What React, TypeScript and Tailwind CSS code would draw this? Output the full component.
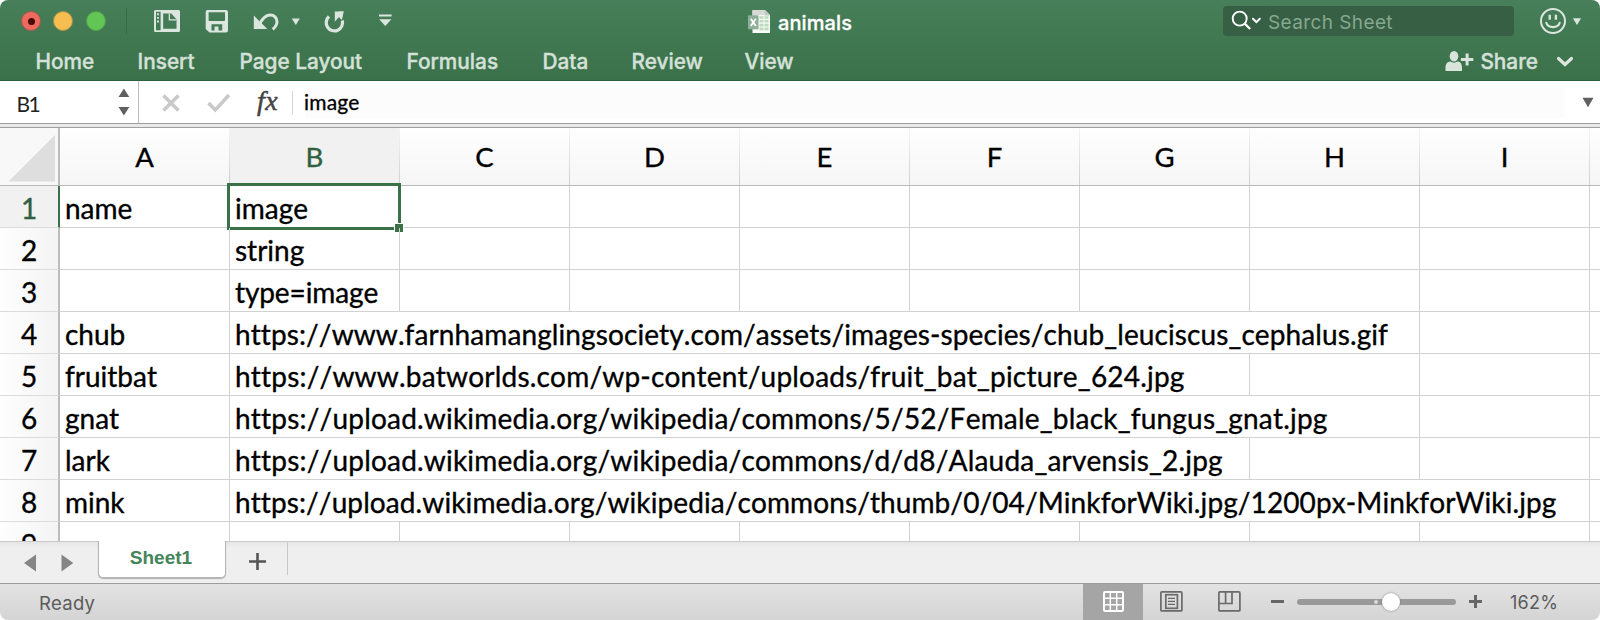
import type { ReactNode } from "react";

const columns = ["A", "B", "C", "D", "E", "F", "G", "H", "I"];

type Row = { name: string; value: string; tracking: string; span: string; rest: number };

const rows: Row[] = [
  { name: "name", value: "image", tracking: "", span: "w-[170px]", rest: 7 },
  { name: "", value: "string", tracking: "", span: "w-[170px]", rest: 7 },
  { name: "", value: "type=image", tracking: "tracking-[-0.1px]", span: "w-[170px]", rest: 7 },
  { name: "chub", value: "https://www.farnhamanglingsociety.com/assets/images-species/chub_leuciscus_cephalus.gif", tracking: "tracking-[0.1px]", span: "w-[1190px]", rest: 1 },
  { name: "fruitbat", value: "https://www.batworlds.com/wp-content/uploads/fruit_bat_picture_624.jpg", tracking: "tracking-[0.2px]", span: "w-[1020px]", rest: 2 },
  { name: "gnat", value: "https://upload.wikimedia.org/wikipedia/commons/5/52/Female_black_fungus_gnat.jpg", tracking: "tracking-[0.2px]", span: "w-[1190px]", rest: 1 },
  { name: "lark", value: "https://upload.wikimedia.org/wikipedia/commons/d/d8/Alauda_arvensis_2.jpg", tracking: "tracking-[0.2px]", span: "w-[1020px]", rest: 2 },
  { name: "mink", value: "https://upload.wikimedia.org/wikipedia/commons/thumb/0/04/MinkforWiki.jpg/1200px-MinkforWiki.jpg", tracking: "tracking-[0.1px]", span: "w-[1360px]", rest: 0 },
  { name: "", value: "", tracking: "", span: "w-[170px]", rest: 7 },
];

const menus = [
  { label: "Home", width: "w-[102px]" },
  { label: "Insert", width: "w-[102px]" },
  { label: "Page Layout", width: "w-[167px]" },
  { label: "Formulas", width: "w-[136px]" },
  { label: "Data", width: "w-[89px]" },
  { label: "Review", width: "w-[113px]" },
  { label: "View", width: "w-[60px]" },
];

function Light({ className, dot }: { className: string; dot?: boolean }) {
  return (
    <span className={`flex size-5 items-center justify-center rounded-full border ${className}`}>
      {dot && <span className="size-[7px] rounded-full bg-[#4b0a05]" />}
    </span>
  );
}

function TitleBar() {
  return (
    <div className="flex h-[43px] items-start">
      <div className="flex w-[748px] items-start pl-[21px]">
        <div className="mt-[11px] flex gap-[12.4px]">
          <Light className="border-[#a8564a] bg-[#ed6a5f]" dot />
          <Light className="border-[#a8934a] bg-[#f6be50]" />
          <Light className="border-[#4fa04a] bg-[#61c656]" />
        </div>
        <span className="mt-2 ml-[20.4px] h-[26px] w-px bg-[#376a46]" />
        <svg className="mt-[9px] ml-[26.500px]" width="26" height="24" viewBox="0 0 26 24" fill="#dbe6de">
          <path d="M1.500 1h23A1.500 1.500 0 0 1 26 2.500v19a1.500 1.500 0 0 1-1.500 1.500h-23A1.500 1.500 0 0 1 0 21.500v-19A1.500 1.500 0 0 1 1.500 1zM2 2.700v18.600h4.600V2.700zM9.200 4.600v15.200h13.300V10.200l-5.300-5.600z" fillRule="evenodd" />
          <path d="M3 4.300h1.900v1.900H3zM3 7.900h1.900v1.900H3zM3 11.500h1.900v1.900H3z" />
          <path d="M16 4.600v5.600h6.500v1.300h-7.800V4.600z" />
        </svg>
        <svg className="mt-[9px] ml-[25.5px]" width="24" height="24" viewBox="0 0 24 24" fill="#dbe6de">
          <path d="M2 1h19a2 2 0 0 1 2 2v18.500a2 2 0 0 1-2 2H4.500L.7 20V3A2 2 0 0 1 2 1zM3.600 3.200v8a.8.8 0 0 0 .8.8h14.800a.8.8 0 0 0 .8-.8v-8zM6.500 15.200v6.400h3v-4h4v4h3.700v-6.400z" fillRule="evenodd" />
        </svg>
        <svg className="mt-[9px] ml-[23.5px]" width="27" height="24" viewBox="0 0 27 24" fill="none" stroke="#dbe6de">
          <path d="M.8 6.500v13.500h13.500z" fill="#dbe6de" stroke="none" />
          <path d="M6.500 15c2.500-4.700 6.500-9 10.800-9a6.600 6.600 0 0 1 6.700 6.700c0 3.200-1.700 5.400-4.300 7.600" strokeWidth="3" />
        </svg>
        <svg className="mt-[17px] ml-[11.500px]" width="10" height="9" viewBox="0 0 10 9"><path d="M.8 1.500h8L4.800 8z" fill="#dbe6de" /></svg>
        <svg className="mt-[9px] ml-[22.500px]" width="22" height="26" viewBox="0 0 22 26" fill="none" stroke="#dbe6de">
          <path d="M5 7.500a8.200 8.200 0 1 0 13.300 4" strokeWidth="3.200" />
          <path d="M10.800 2.500h8.900l-8.900 10.200z" fill="#dbe6de" stroke="none" />
          <path d="M19.700 2.500h-5v5.500l3.300 3z" fill="#dbe6de" stroke="none" />
        </svg>
        <svg className="mt-[14px] ml-[32px]" width="15" height="14" viewBox="0 0 15 14"><path d="M1 .4h12.600v2.100H1zM1.200 5.200h12.200L7.300 12z" fill="#dbe6de" /></svg>
      </div>
      <svg className="mt-[9px]" width="23" height="25" viewBox="0 0 23 25">
        <path d="M4.500 1H17l5 5v18H4.500z" fill="#f7f9f7" />
        <path d="M4.500 1H17l-1 5H9l-4.500 3z" fill="#d6d9d6" />
        <path d="M16.500 1v5.500H22z" fill="#bfc6c0" />
        <path d="M11.500 7.200h4v2.600h-4zM11.500 11h4v2.600h-4zM11.500 14.800h4v2.600h-4zM11.500 18.600h4v2.600h-4zM16.500 7.200h4v2.600h-4zM16.500 11h4v2.600h-4zM16.500 14.800h4v2.600h-4zM16.500 18.600h4v2.600h-4z" fill="#bcdcbe" />
        <rect x="0" y="6.300" width="10.500" height="14" fill="#8fae98" />
        <path d="m2.800 9.800 5 7.200M7.800 9.800l-5 7.200" stroke="#fff" strokeWidth="1.800" />
      </svg>
      <span className="mt-[11px] ml-[7px] text-[20px] leading-6 font-medium tracking-[0.1px] text-white [-webkit-text-stroke:0.3px]">animals</span>
      <div className="ml-auto flex items-start pr-[18px]">
        <div className="mt-[6px] flex h-[30px] w-[291px] items-start rounded-[4px] bg-[#365f44] pl-[8px]">
          <svg className="mt-[4px]" width="30" height="22" viewBox="0 0 30 22" fill="none" stroke="#fff">
            <circle cx="8.700" cy="8.600" r="7" strokeWidth="1.900" />
            <path d="m13.700 13.700 5.500 5.300" strokeWidth="2.300" />
            <path d="m22 8.800 3.400 3.400 3.400-3.400" strokeWidth="2" strokeLinecap="round" />
          </svg>
          <span className="mt-[5px] ml-[7px] text-[19px] leading-6 tracking-[0.4px] text-[#86a790]">Search Sheet</span>
        </div>
        <svg className="mt-[7px] ml-[25px]" width="28" height="28" viewBox="0 0 28 28" fill="none" stroke="#dbe6de">
          <circle cx="14" cy="14" r="12" strokeWidth="2" />
          <path d="M10.700 7.800v5M16.900 7.800v5" strokeWidth="2.400" />
          <path d="M7.300 15.800c1.500 5.700 11.900 5.700 13.400 0" strokeWidth="2.100" strokeLinecap="round" />
        </svg>
        <svg className="mt-[17px] ml-[5px]" width="10" height="9" viewBox="0 0 10 9"><path d="M.9 1.200h8.200L5 8z" fill="#dbe6de" /></svg>
      </div>
    </div>
  );
}

function Ribbon() {
  return (
    <div className="flex h-[37px] items-start pt-[7px] pl-[35.500px] text-[20.800px] leading-6 font-medium text-[#d5e1d8] [-webkit-text-stroke:0.35px]">
      {menus.map((m) => (
        <span key={m.label} className={`${m.width} shrink-0 whitespace-nowrap`}>{m.label}</span>
      ))}
      <svg className="ml-auto" width="29" height="22" viewBox="0 0 29 22" fill="#d9e4dc">
        <ellipse cx="9" cy="6.200" rx="4.300" ry="5.200" />
        <path d="M.5 21v-3.500c0-4 2.500-6 5-6 1.800 1.500 5 1.500 7 0 2.500 0 4.500 2 4.500 6V21z" />
        <path d="M20.600 3.500h3v4.500h4.700v3h-4.700v4.500h-3V11h-4.700V8h4.700z" />
      </svg>
      <span className="ml-[6px]">Share</span>
      <svg className="mt-[6px] mr-[26px] ml-[18px]" width="18" height="12" viewBox="0 0 18 12" fill="none"><path d="m2.500 2.500 6.500 6 6.500-6" stroke="#dbe6de" strokeWidth="3.200" strokeLinecap="round" /></svg>
    </div>
  );
}

function FormulaBar() {
  return (
    <div className="flex h-[42px] bg-white">
      <div className="flex w-[139px] shrink-0 items-start border-r border-[#bdbdbd] font-[Lato]">
        <span className="mt-[11px] ml-[16.500px] w-[101.500px] text-[21px] leading-6 tracking-[-1.700px] text-[#222]">B1</span>
        <svg className="mt-[7px]" width="12" height="28" viewBox="0 0 12 28"><path d="M.5 9 5.900.5 11.300 9zM.5 19h10.800l-5.400 8.500z" fill="#606060" /></svg>
      </div>
      <svg className="mt-[12px] ml-[22px]" width="20" height="20" viewBox="0 0 20 20"><path d="m2.500 2.500 15 15M17.500 2.500l-15 15" stroke="#c9c9c9" strokeWidth="3.600" /></svg>
      <svg className="mt-[11px] ml-[26px]" width="24" height="21" viewBox="0 0 24 21" fill="none"><path d="m1.500 11 6.800 7L22 3" stroke="#c9c9c9" strokeWidth="3.600" /></svg>
      <span className="mt-[5px] ml-[26px] w-[35px] font-['Liberation_Serif'] text-[28px] leading-[30px] font-normal tracking-[0.5px] text-[#444] italic [-webkit-text-stroke:0.5px]">fx</span>
      <span className="mt-[10px] h-6 w-px bg-[#d5d5d5]" />
      <div className="mt-[6px] ml-[12px] flex h-[31px] w-[1260px] items-start bg-[#fcfcfc] font-[Lato] text-black">
        <span className="mt-[2px] -ml-px text-[21px] leading-[26px] tracking-[0.2px] [-webkit-text-stroke:0.3px]">image</span>
      </div>
      <svg className="mt-[16px] mr-[6px] ml-auto" width="12" height="11" viewBox="0 0 12 11"><path d="M.5.800h11L6 10.300z" fill="#606060" /></svg>
    </div>
  );
}

function Cell({ width, children, className = "" }: { width: string; children?: ReactNode; className?: string }) {
  return (
    <div className={`relative ${width} shrink-0 border-r border-[#d2d2d2] pl-[5px] text-[28px] leading-[44px] whitespace-nowrap text-black ${className}`}>
      {children}
    </div>
  );
}

function Sheet() {
  return (
    <div className="h-[414px] overflow-hidden border-b border-[#c9c9c9] bg-white font-[Lato] [font-kerning:none] [-webkit-text-stroke:0.35px]">
      <div className="flex h-[58px] border-b border-[#b9b9b9] bg-linear-to-b from-[#fefefe] to-[#f6f6f6]">
        <div className="w-[60px] shrink-0 border-r-2 border-[#bcbcbc] bg-[#f8f8f8]">
          <svg className="mt-[7px] ml-[8px]" width="47" height="47" viewBox="0 0 47 47"><path d="M47 0v46.500H.5z" fill="#dedede" /></svg>
        </div>
        {columns.map((c) => (
          <div
            key={c}
            className={`flex w-[170px] shrink-0 justify-center text-[27.500px] leading-[57px] ${c === "B" ? "bg-[#f1f1f1] text-[#30603f]" : "text-black"}`}
          >
            <span className="ml-auto">{c}</span>
            <span className="ml-auto h-full w-px bg-linear-to-b from-[#f5f5f5] to-[#cfcfcf]" />
          </div>
        ))}
      </div>
      {rows.map((row, i) => (
        <div key={i} className="flex h-[42px]">
          <div
            className={`w-[60px] shrink-0 border-r-2 text-center text-[28px] leading-[44px] ${
              i === 0 ? "border-[#3b7149] bg-[#f1f1f1] text-[#30603f]" : "border-[#bcbcbc] bg-linear-to-r from-[#fefefe] to-[#f4f4f4] text-black"
            } border-b border-b-[#dcdcdc]`}
          >
            {i + 1}
          </div>
          <div className="flex h-[42px] grow border-b border-[#d2d2d2]">
            <Cell width="w-[170px]">{row.name}</Cell>
            <Cell width={row.span} className={row.tracking}>
              {row.value}
              {i === 0 && (
                <span className="absolute -top-[3px] -left-[3px] h-[47px] w-[174px] border-[3px] border-[#3b7149]">
                  <span className="absolute -right-[6px] -bottom-[6px] size-[10px] border border-white bg-[#3b7149]" />
                </span>
              )}
            </Cell>
            {Array.from({ length: row.rest }, (_, k) => (
              <Cell key={k} width="w-[170px]" />
            ))}
          </div>
        </div>
      ))}
    </div>
  );
}

function Tabs() {
  return (
    <div className="flex h-[41px] items-start bg-linear-to-b from-[#e6e6e6] via-[#efefef] via-15% to-[#efefef]">
      <svg className="mt-[12px] ml-[24px]" width="50" height="18" viewBox="0 0 50 18"><path d="M12 .5v17L0 9zM37.500.5v17L49.300 9z" fill="#858585" /></svg>
      <div className="-mt-px ml-[24px] flex h-[37px] w-[128px] justify-center rounded-b-[5px] border border-t-0 border-[#b5b5b5] bg-white shadow-[0_1px_1px_#b0b0b0]">
        <span className="mt-[5px] -ml-[2px] font-['Liberation_Sans'] text-[19px] leading-6 font-bold text-[#458559]">Sheet1</span>
      </div>
      <svg className="mt-[11px] ml-[23px]" width="17" height="17" viewBox="0 0 17 17"><path d="M8.500 0v17M0 8.500h17" stroke="#555" strokeWidth="2.600" /></svg>
      <span className="ml-[21px] h-[33px] w-px bg-[#c9c9c9]" />
    </div>
  );
}

function StatusBar() {
  return (
    <div className="flex h-[37px] items-start border-t border-[#9d9d9d] bg-linear-to-b from-[#e3e3e3] to-[#d4d4d4] text-[18px] leading-6 text-[#5b5b5b]">
      <span className="mt-[7px] ml-[39px] text-[18.500px] tracking-[0.3px]">Ready</span>
      <div className="ml-auto flex h-full w-[60px] justify-center bg-[#a5a5a5]">
        <svg className="mt-[7px]" width="21" height="21" viewBox="0 0 21 21" fill="none" stroke="#fff">
          <rect x="1" y="1" width="19" height="19" rx="1" strokeWidth="2" />
          <path d="M7.300 1v19M13.700 1v19M1 7.300h19M1 13.700h19" strokeWidth="1.500" />
        </svg>
      </div>
      <svg className="mt-[7px] ml-[17px]" width="23" height="21" viewBox="0 0 23 21" fill="none" stroke="#6a6a6a">
        <rect x=".9" y=".9" width="21" height="19" rx="1" strokeWidth="1.700" />
        <rect x="5.800" y="3.700" width="11.600" height="13.600" strokeWidth="1.700" />
        <path d="M8 7.300h7M8 10.300h7M8 13.300h7" strokeWidth="1.300" />
      </svg>
      <svg className="mt-[7px] ml-[35px]" width="23" height="21" viewBox="0 0 23 21" fill="none" stroke="#6a6a6a">
        <rect x=".9" y=".9" width="21" height="19" rx="1" strokeWidth="1.700" />
        <path d="M1 12.500h13V1M7.600 1v11.500" strokeWidth="1.700" />
      </svg>
      <span className="mt-[16px] ml-[30px] h-[3px] w-[13px] bg-[#666]" />
      <div className="relative mt-[15px] ml-[13px] h-[6px] w-[159px] rounded-full bg-[#999]">
        <span className="absolute top-px left-[77px] size-[4px] rounded-full bg-[#d8d8d8]" />
        <span className="absolute -top-[6px] left-[85px] size-[18px] rounded-full bg-white shadow-[0_0_2px_#777]" />
      </div>
      <svg className="mt-[11px] ml-[13px]" width="13" height="13" viewBox="0 0 13 13"><path d="M6.500 0v13M0 6.500h13" stroke="#666" strokeWidth="3" /></svg>
      <span className="mt-[7px] mr-[39px] ml-[28px] w-[51px] tracking-[0.3px]">162%</span>
    </div>
  );
}

export default function App() {
  return (
    <div className="h-[620px] w-[1600px] bg-white font-[Inter]">
      <div className="flex h-[620px] flex-col overflow-hidden rounded-[8px] bg-white">
        <header className="h-[81px] shrink-0 border-b border-[#2f603d] bg-linear-to-b from-[#477f5a] to-[#3a7149]">
          <TitleBar />
          <Ribbon />
        </header>
        <FormulaBar />
        <div className="h-[5px] shrink-0 border-y border-[#9f9f9f] bg-[#e9e9e9]" />
        <Sheet />
        <Tabs />
        <StatusBar />
      </div>
    </div>
  );
}
